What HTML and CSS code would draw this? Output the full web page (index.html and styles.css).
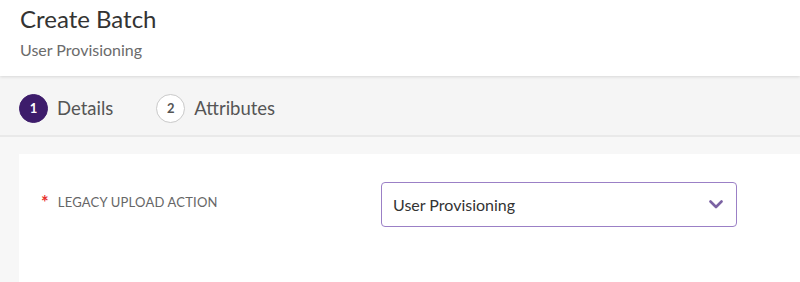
FILE: index.html
```html
<!DOCTYPE html>
<html lang="en">

<head>
    <meta charset="UTF-8">
    <title>Create Batch</title>
    <link rel="stylesheet" href="styles.css">
</head>

<body>

    <header class="page-header">
        <h1>Create Batch</h1>
        <p class="subtitle">User Provisioning</p>
    </header>

    <nav class="steps">
        <div class="step active">
            <span class="step-num">1</span>
            <span class="step-label">Details</span>
        </div>
        <div class="step">
            <span class="step-num">2</span>
            <span class="step-label">Attributes</span>
        </div>
    </nav>

    <main class="container">
        <section class="card">
            <div class="form-row">
                <label class="form-label"><span class="required">*</span>Legacy upload action</label>
                <div class="select">
                    <span>User Provisioning</span>
                    <svg width="14" height="9" viewBox="0 0 14 9">
                        <path d="M1.5 1.5 L7 7 L12.5 1.5" fill="none" stroke="#7b62a3" stroke-width="2.6" stroke-linecap="round" stroke-linejoin="round"/>
                    </svg>
                </div>
            </div>
        </section>
    </main>

</body>

</html>
```

FILE: styles.css
```css
body {
    margin: 0;
    background-color: #f7f7f7;
    font-family: Lato, "Open Sans", sans-serif;
    color: #333;
    overflow: hidden;
}

.page-header {
    background-color: white;
    height: 76px;
    padding: 0 20px;
    box-sizing: border-box;
    position: relative;
    box-shadow: 0 1px 3px rgba(0, 0, 0, .12);
}

.page-header h1 {
    margin: 0;
    padding-top: 4px;
    font-size: 24px;
    font-weight: normal;
    color: #333;
    line-height: 30px;
}

.subtitle {
    margin: 6px 0 0;
    font-size: 16px;
    color: #6b6b6b;
    line-height: 20px;
}

.steps {
    height: 61px;
    background-color: #f5f5f5;
    border-bottom: 2px solid #e9e9e9;
    display: flex;
    align-items: center;
    padding: 5px 19px 0;
    box-sizing: border-box;
    gap: 43px;
}

.step {
    display: flex;
    align-items: center;
    gap: 9px;
}

.step-num {
    width: 29px;
    height: 29px;
    box-sizing: border-box;
    border-radius: 50%;
    border: 1.5px solid #c9c9c9;
    display: flex;
    align-items: center;
    justify-content: center;
    font-size: 13px;
    font-weight: bold;
    color: #555;
    background-color: white;
}

.step.active .step-num {
    background-color: #3d1c6b;
    border-color: #3d1c6b;
    color: white;
}

.step-label {
    font-size: 18.5px;
    color: #555;
}

.container {
    padding: 17px 0 0 19px;
}

.card {
    background-color: white;
    height: 140px;
    padding: 28px 0 0 22px;
    box-sizing: border-box;
}

.form-row {
    display: flex;
    align-items: flex-start;
}

.form-label {
    width: 340px;
    padding-top: 12px;
    font-size: 13px;
    color: #666;
    text-transform: uppercase;
    letter-spacing: .2px;
}

.required {
    color: #e8312f;
    font-size: 18px;
    font-weight: bold;
    margin-right: 9px;
    vertical-align: -2px;
    line-height: 10px;
}

.select {
    width: 356px;
    height: 45px;
    box-sizing: border-box;
    border: 1px solid #9b80c6;
    border-radius: 4px;
    display: flex;
    align-items: center;
    justify-content: space-between;
    padding: 0 13px 0 11px;
    font-size: 16px;
    color: #333;
}
```
